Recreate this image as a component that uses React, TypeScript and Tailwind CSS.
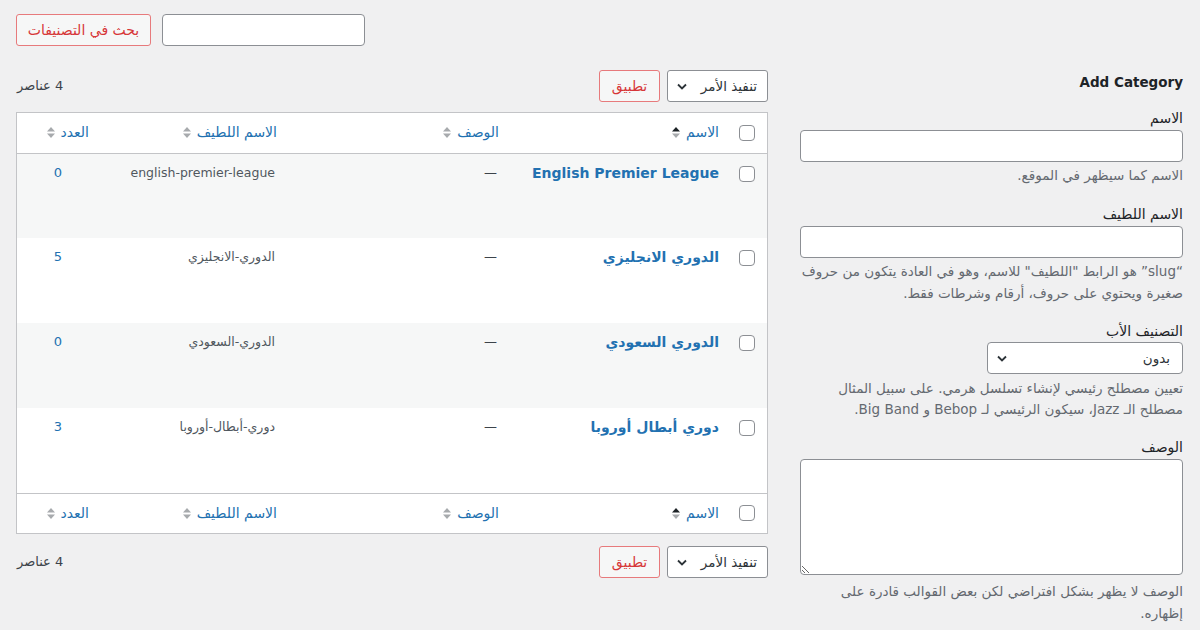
import React from 'react'

interface Term {
  name: string
  slug: string
  count: number
}

const terms: Term[] = [
  { name: 'English Premier League', slug: 'english-premier-league', count: 0 },
  { name: 'الدوري الانجليزي', slug: 'الدوري-الانجليزي', count: 5 },
  { name: 'الدوري السعودي', slug: 'الدوري-السعودي', count: 0 },
  { name: 'دوري أبطال أوروبا', slug: 'دوري-أبطال-أوروبا', count: 3 },
]

const SortIcon = ({ active = false }: { active?: boolean }) => (
  <svg width="8" height="13" viewBox="0 0 8 13" className="shrink-0">
    <path d="M0 5.5 L4 1 L8 5.5Z" fill={active ? '#1d2327' : '#a7aaad'} />
    <path d="M0 7.5 L8 7.5 L4 12Z" fill="#a7aaad" />
  </svg>
)

const Checkbox = () => (
  <span className="block h-4 w-4 rounded-[4px] border border-[#8c8f94] bg-white" />
)

const Chevron = () => (
  <svg width="10" height="7" viewBox="0 0 10 7" className="shrink-0">
    <polyline
      points="1,1.5 5,5.5 9,1.5"
      fill="none"
      stroke="#2c3338"
      strokeWidth="1.8"
    />
  </svg>
)

const RedButton = ({ label, className = '' }: { label: string; className?: string }) => (
  <div
    className={`flex h-8 items-center justify-center rounded-[3px] border border-[#e77a7c] bg-[#f6f7f7] text-[14px] text-[#d63638] ${className}`}
  >
    {label}
  </div>
)

const BulkActions = () => (
  <div className="flex h-8 items-center justify-between">
    <div className="flex items-center gap-[7px]">
      <div className="flex h-8 w-[101px] items-center justify-between rounded-[3px] border border-[#8c8f94] bg-white pl-[9px] pr-[10px] text-[13.5px] text-[#2c3338]">
        <span>تنفيذ الأمر</span>
        <Chevron />
      </div>
      <RedButton label="تطبيق" className="w-[61px]" />
    </div>
    <span className="pl-[1px] text-[13px] text-[#3c434a]">4 عناصر</span>
  </div>
)

const SortLink = ({ label, active = false }: { label: string; active?: boolean }) => (
  <span className="flex items-center gap-[6px] text-[14px] text-[#2271b1]">
    {label}
    <SortIcon active={active} />
  </span>
)

const HeaderRow = ({ top = false }: { top?: boolean }) => {
  const border = top ? 'border-b' : 'border-t'
  const th = `h-[40px] ${border} border-[#c3c4c7] text-right align-middle font-normal`
  return (
    <tr>
      <th className={`${th} pr-[12px]`}>
        <Checkbox />
      </th>
      <th className={`${th} pr-[9px]`}>
        <SortLink label="الاسم" active />
      </th>
      <th className={`${th} pr-[10px]`}>
        <SortLink label="الوصف" />
      </th>
      <th className={`${th} pr-[10px]`}>
        <SortLink label="الاسم اللطيف" />
      </th>
      <th className={`${th} pr-[10px]`}>
        <SortLink label="العدد" />
      </th>
    </tr>
  )
}

const TermRow = ({ term, index }: { term: Term; index: number }) => {
  const td = 'h-[85px] align-top pt-[9px] text-right'
  return (
    <tr className={index % 2 === 0 ? 'bg-[#f6f7f7]' : 'bg-white'}>
      <td className={`${td} pr-[12px] pt-[12px]`}>
        <Checkbox />
      </td>
      <td className={`${td} pr-[9px]`}>
        <span className="text-[14px] font-bold leading-5 text-[#2271b1]">
          {term.name}
        </span>
      </td>
      <td className={`${td} pr-[12px]`}>
        <span className="leading-5 text-[#3c434a]">—</span>
      </td>
      <td className={`${td} pr-[12px]`}>
        <span className="text-[12.5px] leading-5 text-[#50575e]">{term.slug}</span>
      </td>
      <td className={`${td} !text-center`}>
        <span className="leading-5 text-[#2271b1]">{term.count}</span>
      </td>
    </tr>
  )
}

const Field = ({ label, children }: { label: string; children: React.ReactNode }) => (
  <div className="flex flex-col">
    <label className="text-[14px] leading-[18px] text-[#1d2327]">{label}</label>
    {children}
  </div>
)

export default function App() {
  return (
    <div
      dir="rtl"
      className="h-[630px] w-full overflow-hidden bg-[#f0f0f1] pl-4 pr-[17px] pt-[14px] font-['DejaVu_Sans',sans-serif] text-[13px] text-[#3c434a]"
    >
      {/* search */}
      <div className="flex items-center justify-end gap-[11px]">
        <input
          className="h-8 w-[203px] rounded-[4px] border border-[#8c8f94] bg-white"
          readOnly
        />
        <RedButton label="بحث في التصنيفات" className="w-[135px]" />
      </div>

      <div className="mt-[24px] flex items-start gap-[32px]">
        {/* add form */}
        <div className="flex w-[383px] shrink-0 flex-col">
          <h2 className="h-6 text-[13.5px] font-bold leading-6 text-[#1d2327]">Add Category</h2>

          <div className="mt-[15px]">
            <Field label="الاسم">
              <input
                className="mt-[3px] h-8 w-full rounded-[4px] border border-[#8c8f94] bg-white"
                readOnly
              />
              <p className="mt-[3px] text-[13.5px] leading-5 text-[#646970]">
                الاسم كما سيظهر في الموقع.
              </p>
            </Field>
          </div>

          <div className="mt-[20px]">
            <Field label="الاسم اللطيف">
              <input
                className="mt-[3px] h-8 w-full rounded-[4px] border border-[#8c8f94] bg-white"
                readOnly
              />
              <p className="mt-[2px] text-[13.5px] leading-[22px] text-[#646970]">
                “slug” هو الرابط "اللطيف" للاسم، وهو في العادة يتكون من حروف
                <br />
                صغيرة ويحتوي على حروف، أرقام وشرطات فقط.
              </p>
            </Field>
          </div>

          <div className="mt-[18px]">
            <Field label="التصنيف الأب">
              <div className="mt-[2px] flex h-8 w-[196px] items-center justify-between rounded-[4px] border border-[#8c8f94] bg-white pl-[9px] pr-[12px] text-[13.5px] text-[#2c3338]">
                <span>بدون</span>
                <Chevron />
              </div>
              <p className="mt-[4px] text-[13.5px] leading-[21px] text-[#646970]">
                تعيين مصطلح رئيسي لإنشاء تسلسل هرمي. على سبيل المثال
                <br />
                مصطلح الـ Jazz، سيكون الرئيسي لـ Bebop و Big Band.
              </p>
            </Field>
          </div>

          <div className="mt-[18px]">
            <Field label="الوصف">
              <textarea
                className="mt-[3px] h-[116px] w-full rounded-[4px] border border-[#8c8f94] bg-white"
                readOnly
              />
              <p className="mt-[5px] text-[13.5px] leading-[22px] text-[#646970]">
                الوصف لا يظهر بشكل افتراضي لكن بعض القوالب قادرة على
                <br />
                إظهاره.
              </p>
            </Field>
          </div>
        </div>

        {/* terms table */}
        <div className="flex min-w-0 flex-1 flex-col">
          <BulkActions />
          <div className="mt-[10px] border border-[#c3c4c7] bg-white">
            <table className="w-full table-fixed border-collapse">
              <colgroup>
                <col className="w-[39px]" />
                <col className="w-[219px]" />
                <col className="w-[222px]" />
                <col className="w-[188px]" />
                <col />
              </colgroup>
              <thead>
                <HeaderRow top />
              </thead>
              <tbody>
                {terms.map((t, i) => (
                  <TermRow key={t.slug} term={t} index={i} />
                ))}
              </tbody>
              <tfoot>
                <HeaderRow />
              </tfoot>
            </table>
          </div>
          <div className="mt-[12px]">
            <BulkActions />
          </div>
        </div>
      </div>
    </div>
  )
}
